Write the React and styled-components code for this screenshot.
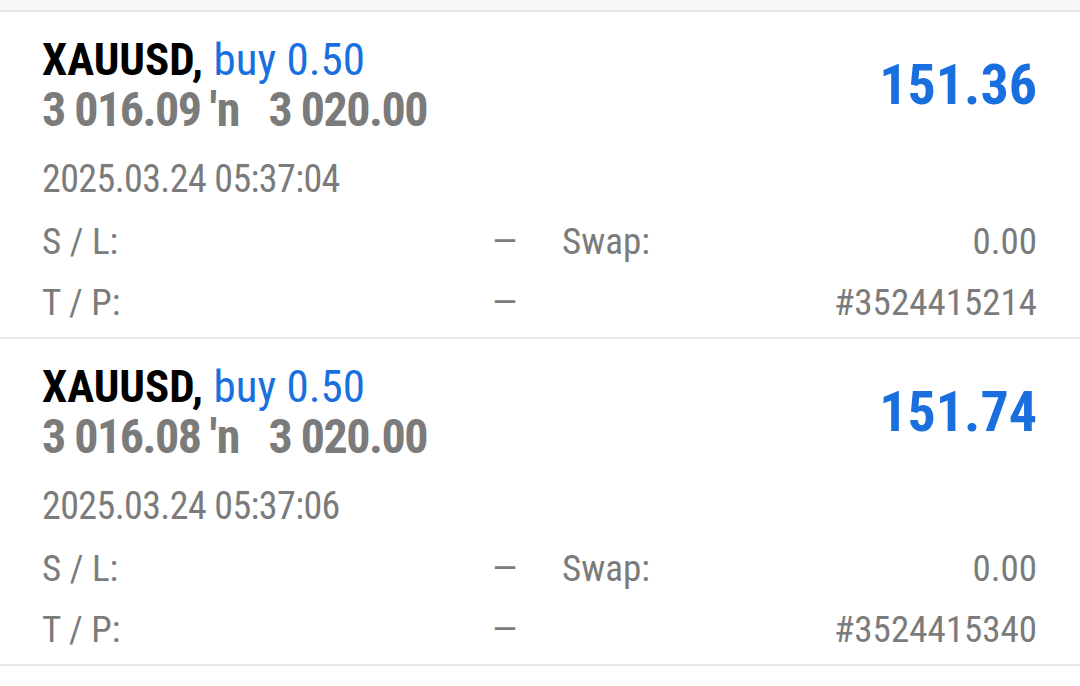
import React from "react";
import styled, { createGlobalStyle } from "styled-components";

const GlobalStyle = createGlobalStyle`
  html, body {
    margin: 0;
    padding: 0;
    background: #ffffff;
  }
  body {
    font-family: "Roboto Condensed", "Liberation Sans Narrow", Roboto, sans-serif;
    font-stretch: condensed;
  }
`;

const positions = [
  {
    id: 1,
    symbol: "XAUUSD",
    side: "buy 0.50",
    open: "3 016.09",
    current: "3 020.00",
    profit: "151.36",
    time: "2025.03.24 05:37:04",
    sl: "—",
    tp: "—",
    swap: "0.00",
    ticket: "#3524415214",
  },
  {
    id: 2,
    symbol: "XAUUSD",
    side: "buy 0.50",
    open: "3 016.08",
    current: "3 020.00",
    profit: "151.74",
    time: "2025.03.24 05:37:06",
    sl: "—",
    tp: "—",
    swap: "0.00",
    ticket: "#3524415340",
  },
];

export default function App() {
  return (
    <>
      <GlobalStyle />
      <Page>
        <TopBand />
        {positions.map((p) => (
          <Card key={p.id}>
            <Header>
              <div>
                <Title>
                  {p.symbol}, <Side>{p.side}</Side>
                </Title>
                <Prices>
                  <span>{p.open}</span>
                  <Arrow>′n</Arrow>
                  <span>{p.current}</span>
                </Prices>
              </div>
              <Profit>{p.profit}</Profit>
            </Header>
            <Time>{p.time}</Time>
            <Details>
              <Cell>
                <span>S / L:</span>
                <span>{p.sl}</span>
              </Cell>
              <Cell>
                <span>Swap:</span>
                <span>{p.swap}</span>
              </Cell>
              <Cell>
                <span>T / P:</span>
                <span>{p.tp}</span>
              </Cell>
              <Cell>
                <span />
                <span>{p.ticket}</span>
              </Cell>
            </Details>
          </Card>
        ))}
      </Page>
    </>
  );
}

const Page = styled.div`
  width: 1080px;
  min-height: 686px;
  background: #ffffff;
`;

const TopBand = styled.div`
  height: 10px;
  background: #f6f6f6;
  border-bottom: 2px solid #e7e7e7;
`;

const Card = styled.div`
  padding: 23px 43px 4px 42px;
  border-bottom: 2px solid #e7e7e7;
`;

const Header = styled.div`
  display: flex;
  align-items: center;
  justify-content: space-between;
`;

const Title = styled.div`
  font-size: 45px;
  line-height: 50px;
  font-weight: 700;
  color: #000000;
`;

const Side = styled.span`
  font-weight: 400;
  color: #1a6fdf;
`;

const Prices = styled.div`
  display: flex;
  align-items: baseline;
  font-size: 48px;
  line-height: 50px;
  font-weight: 700;
  color: #7b7b7b;
  letter-spacing: -1.5px;
  white-space: pre;
`;

const Arrow = styled.span`
  margin: 0 28px 0 9px;
  letter-spacing: 0;
`;

const Profit = styled.div`
  font-size: 56px;
  line-height: 56px;
  font-weight: 700;
  color: #1a6fdf;
`;

const Time = styled.div`
  margin-top: 22px;
  font-size: 38px;
  line-height: 44px;
  color: #7b7b7b;
  letter-spacing: -0.6px;
`;

const Details = styled.div`
  margin-top: 10px;
  display: grid;
  grid-template-columns: 1fr 1fr;
  column-gap: 45px;
`;

const Cell = styled.div`
  display: flex;
  justify-content: space-between;
  font-size: 37px;
  line-height: 61px;
  color: #7b7b7b;
`;
